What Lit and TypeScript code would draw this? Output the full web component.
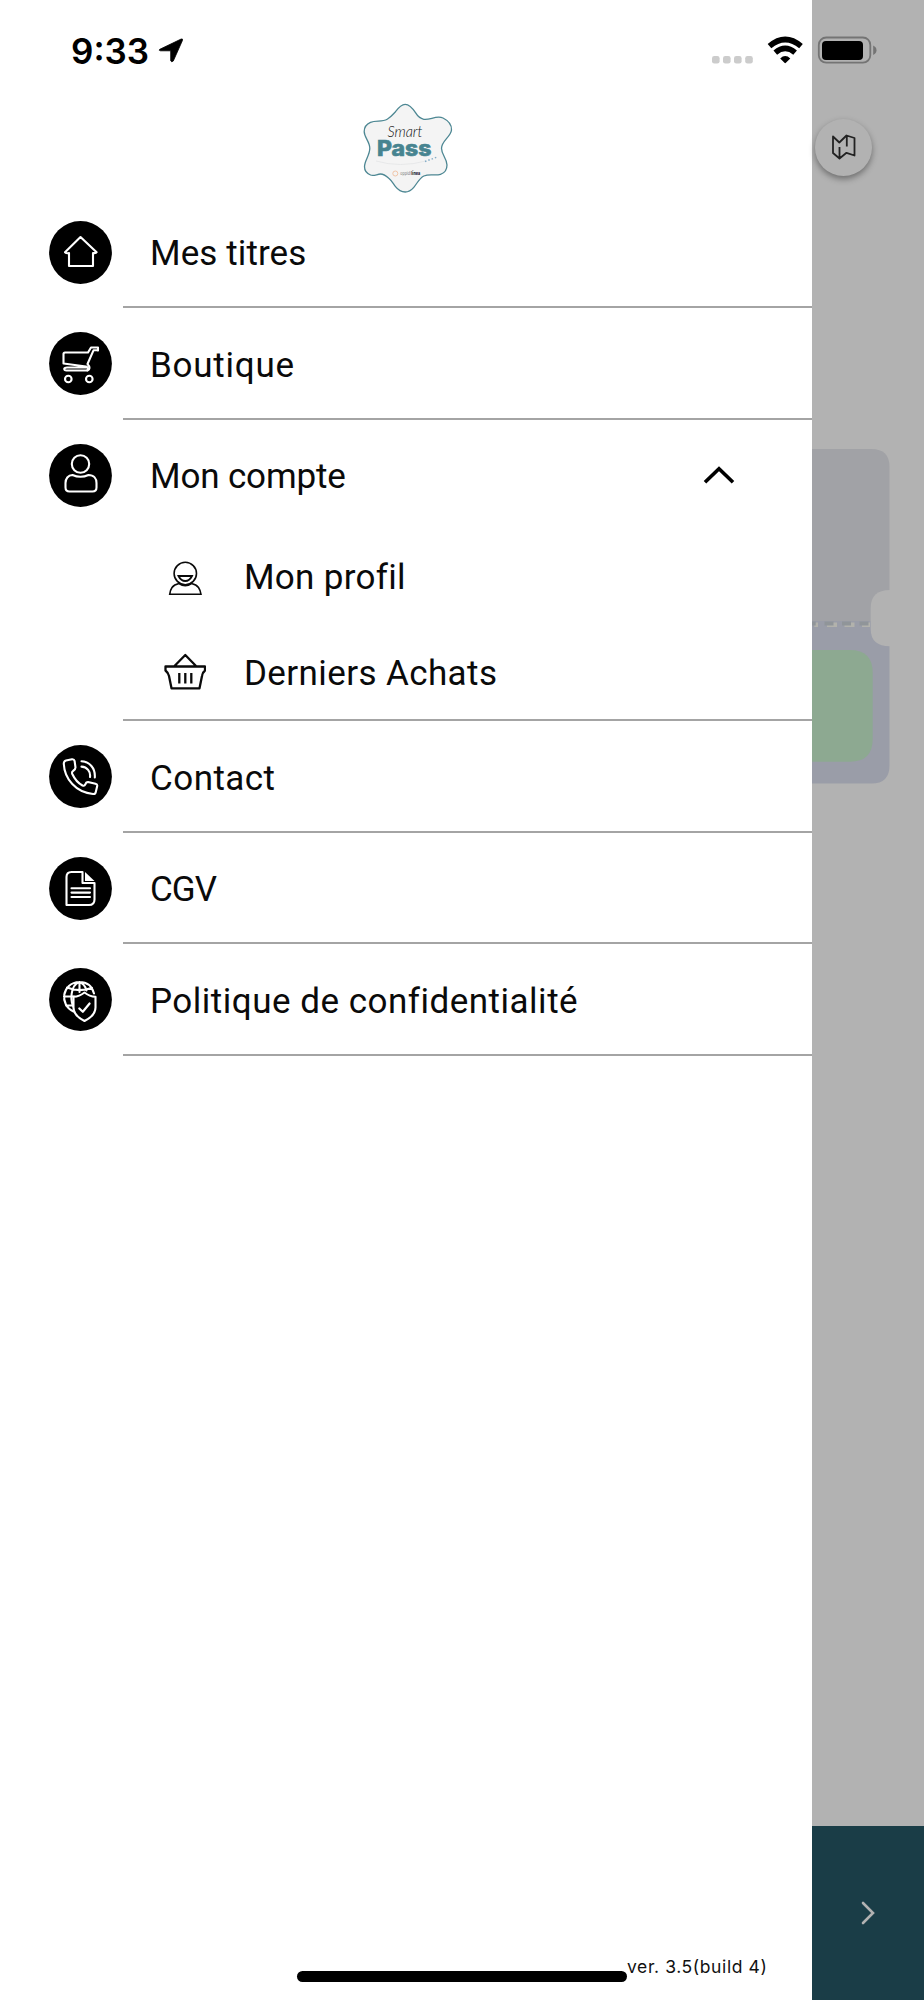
import { LitElement, html, css, svg, TemplateResult } from "lit";
import { customElement, property } from "lit/decorators.js";

const glyphs: Record<string, TemplateResult> = {
  home: svg`<path d="M31.500 16 L16 31.300 Q16.500 32.500 20 32 V45 H44 V32 Q47 32.500 47.600 31.300 Z"/>`,
  cart: svg`
    <path d="M49 18.500 V15.500 H42 L39 20.500 H16 Q14.500 20.500 14.500 22 V31.500 L37 34.500 Q40.500 36 38 38.500 H17.500 Q15 38.500 15.300 36.500 Q15.700 35.500 18 35.500 H38"/>
    <path d="M49 18.300 H44.500 L38.500 32 Q42.500 36.500 38.500 38.500"/>
    <circle cx="19.300" cy="47" r="3.300"/><circle cx="40.300" cy="47" r="3.300"/>`,
  user: svg`<circle cx="31.500" cy="20" r="8.700"/>
    <path d="M23.500 31 Q31.500 34.500 39.500 31 C45 31 47.500 35 47.500 39 V43.500 Q47.500 47.500 43.500 47.500 H20.500 Q16.500 47.500 16.500 43.500 V39 C16.500 35 19 31 23.500 31 Z"/>`,
  phone: svg`<path d="M17 15.500 L23 14.200 Q25.200 14 25.600 16 L26.500 22.500 Q26.500 24.500 24 26 Q22.500 27 23.300 29 Q27 37 33.500 40.500 Q35.500 41.300 36.200 39.700 Q37 37 39 37 L46.500 38.700 Q48.500 39.300 48.200 41 L46.800 47 Q46.300 49.300 44 49 C27 47.500 15.500 34 14.800 19 Q14.700 16 17 15.500 Z"/>
    <path d="M32.500 16.300 C40.500 16.800 46.500 23 45.800 32.500 M32.500 21.600 C38 22 41.800 26.500 41 32"/>`,
  doc: svg`<path d="M33.500 15 H22.500 Q17.500 15 17.500 20 V48 H40 Q45.500 48 45.500 42.500 V26 H33.500 Z"/>
    <path fill="#fff" stroke="none" d="M36 15 L45.500 24 H36 Z"/>
    <path d="M22.500 31.300 H41 M22.500 35.600 H41 M22.500 40 H41"/>`,
  privacy: svg`<path d="M24.500 43.500 C10 37 12.500 14.500 30.500 14 C38 14 43 18 45 25.500 M26 41 C20.500 34 21 17 30.500 14 C34.500 15.500 36.500 18.500 37.500 22.500 M30.500 14 V24 M18 19.500 Q30.500 24.500 43 19.800 M15 28.500 H25 M17 37.500 H24"/>
    <path fill="#000" d="M35.500 24.500 Q40.500 28.500 46.500 28.800 V39.500 Q46.500 47.500 35.500 53 Q24.500 47.500 24.500 39.500 V28.800 Q30.500 28.500 35.500 24.500 Z"/>
    <path stroke-width="2.200" d="M30.300 40.500 L33.800 43.800 L40.600 35.500"/>`,
};

@customElement("menu-row")
class MenuRow extends LitElement {
  @property() icon = "";
  @property() label = "";
  @property({ type: Number }) spacing = 0;
  @property({ type: Boolean }) open = false;

  static styles = css`
    :host { display: block; }
    .row { display: flex; align-items: center; height: 111.6px; padding: 0 77.500px 0 48.700px; box-sizing: border-box; }
    .disc { width: 63px; height: 63px; flex: none; margin-right: 38.300px; }
    .disc g { fill: none; stroke: #fff; stroke-width: 2.100; stroke-linejoin: round; stroke-linecap: round; }
    .label { font: 400 35px/40px Roboto, sans-serif; white-space: nowrap; color: #0a0a0a; padding-top: 3.600px; }
    .caret { margin-left: auto; width: 32px; height: 20px; }
  `;

  render() {
    return html`<div class="row">
      <svg class="disc" viewBox="0 0 63 63"><circle cx="31.500" cy="31.500" r="31.400" fill="#000" /><g>${glyphs[this.icon]}</g></svg>
      <span class="label" style="letter-spacing:${this.spacing}px">${this.label}</span>
      ${this.open
        ? html`<svg class="caret" viewBox="0 0 32 20"><path d="M2 17.300 L16 3.700 L30 17.300" fill="none" stroke="#000" stroke-width="3.600" /></svg>`
        : null}
    </div>`;
  }
}

@customElement("status-bar")
class StatusBar extends LitElement {
  static styles = css`
    :host { display: flex; align-items: center; height: 100px; padding: 0 47px 0 71px; box-sizing: border-box; }
    .time { font: 600 35px/40px Inter, sans-serif; color: #000; padding-top: 1px; }
    .arrow { width: 26px; height: 26px; margin-left: 9px; }
    .system { margin-left: auto; width: 166px; height: 30px; }
  `;

  render() {
    return html`
      <span class="time">9:33</span>
      <svg class="arrow" viewBox="0 0 26 26"><path d="M1.800 12.300 L23.200 2 Q25 1.500 24.500 3.300 L15.300 24 Q13.500 25.600 12.700 23.800 V13.800 H2.500 Q0.300 13.300 1.800 12.300 Z" stroke="#000" stroke-width=".8" /></svg>
      <svg class="system" viewBox="711 35 166 30">
        <g fill="#ccc">
          <rect x="712" y="56" width="7.600" height="7.600" rx="2.300" /><rect x="723" y="56" width="7.600" height="7.600" rx="2.300" />
          <rect x="734" y="56" width="7.600" height="7.600" rx="2.300" /><rect x="745.200" y="56" width="7.600" height="7.600" rx="2.300" />
        </g>
        <g fill="none" stroke="#000" stroke-width="5.600">
          <path d="M769.500 46.200 Q785.200 32.800 801 46.200" /><path d="M775.300 52.600 Q785.200 44.200 795.100 52.600" />
        </g>
        <path d="M780.200 58.500 Q785.200 53.700 790.300 58.500 L785.900 62.800 Q785.200 63.500 784.500 62.800 Z" />
        <rect x="818.800" y="37.500" width="51.500" height="25.200" rx="7.500" fill="none" stroke="#747474" stroke-width="1.800" />
        <rect x="822" y="41" width="41" height="19" rx="4" />
        <path d="M873.200 45.500 Q876.500 47.200 876.500 50.300 T873.200 55 Z" fill="#747474" />
      </svg>`;
  }
}

@customElement("app-root")
class AppRoot extends LitElement {
  static styles = css`
    :host { display: block; position: relative; width: 924px; height: 2000px; overflow: hidden; background: #b2b2b2; }
    .status { position: absolute; top: 0; left: 0; right: 0; z-index: 2; }
    .screen { display: flex; height: 100%; }
    .drawer { width: 812.3px; flex: none; display: flex; flex-direction: column; background: #fff; box-sizing: border-box; padding-top: 102px; }
    .logo { width: 92px; height: 92px; margin: 0 0 2.400px 361.500px; flex: none; }
    .line { height: 2px; margin: -2px 0 0 123px; background: #a4a4a4; }
    .sub { display: flex; align-items: center; height: 96px; padding-left: 164px; }
    .subs { height: 189.800px; }
    .subs .sub:first-child { height: 93px; }
    .sub svg { width: 42px; height: 42px; margin-right: 38px; flex: none; fill: none; stroke: #0a0a0a; }
    .sub span { font: 400 35px/40px Roboto, sans-serif; color: #0a0a0a; white-space: nowrap; letter-spacing: .4px; padding-top: 3px; }
    .sub:first-child span { letter-spacing: .3px; padding-top: 1px; }
    .foot { margin-top: auto; height: 48px; display: flex; align-items: flex-start; padding-left: 297px; }
    .home { width: 330px; height: 11px; border-radius: 6px; background: #000; margin-top: 19px; }
    .ver { font: 400 17.500px/22px Inter, sans-serif; letter-spacing: .6px; color: #111; white-space: nowrap; margin-top: 4px; }
    .behind { flex: 1; display: flex; flex-direction: column; padding-top: 118.800px; }
    .map { width: 57px; height: 57px; border-radius: 50%; margin-left: 3px; background: #b2b2b2; box-shadow: 0 3px 6px rgba(0,0,0,.38); display: flex; align-items: center; justify-content: center; }
    .map svg { width: 26px; height: 28px; }
    .ticket { margin-top: 273.500px; width: 77.500px; height: 334.500px; display: block; }
    .next { margin-top: auto; height: 174px; background: #1a3d47; display: flex; justify-content: center; padding-top: 74px; box-sizing: border-box; }
    .next svg { width: 16px; height: 26px; }
    .logo .smart { font: italic 300 15px Lato, sans-serif; }
    .logo .pass { font: 800 21px Inter, sans-serif; }
    .logo .by { font: 400 4.500px Inter, sans-serif; }
    .logo .brand { font: 800 4.500px Inter, sans-serif; }
  `;

  render() {
    return html`
      <status-bar class="status"></status-bar>
      <div class="screen">
        <nav class="drawer">
          <svg class="logo" viewBox="0 0 92 92">
            <path d="M43.200 2.300 C47.500 2.300 50.500 6 53.500 10.700 C55.500 14 57.500 16.500 61.800 17.300 C68 18.300 74.500 13 81 16 C86 18.500 89.800 23 89.500 28 C89 34.500 79.500 39 79.500 46.300 C79.500 53 85 56.500 85 63 C85 67.500 82.500 71 78.500 72.300 C73 74 67.500 71.500 61.800 74 C57 76.500 55.500 81 51.800 85.300 C49 88.500 46.500 90 43.200 90 C39.500 90 36.500 88.500 33.500 84.700 C31 81.500 30 79 26.800 76.300 C24 73.800 22 72 18.500 72 C15 72 12 74.500 8.500 73 C5 71.500 2.500 68.500 2.500 64.700 C2.500 58.500 7.800 53.500 7.800 46.300 C7.800 39.500 2.200 35.500 2.200 29.500 C2.200 25.500 4.500 22 8.500 20.300 C14 18 20 20.300 25.200 17.300 C29 15 30.500 13 33.500 9.700 C36.500 5.500 39 2.300 43.200 2.300 Z" fill="#f4f4f4" stroke="#4d8793" stroke-width="1.300"/>
            <text class="smart" x="25.500" y="34.500" textLength="35" lengthAdjust="spacingAndGlyphs" fill="#111">Smart</text>
            <text class="pass" x="15" y="54" textLength="54.500" lengthAdjust="spacingAndGlyphs" fill="#478490" stroke="#478490" stroke-width=".6">Pass</text>
            <path d="M14 59 Q38 66 64 59" fill="none" stroke="#e3e5e6" stroke-width=".8"/>
            <path d="M63 59.500 L74.500 55.300" stroke="#83adc8" stroke-width="1.500" stroke-dasharray="1.500 2"/>
            <circle cx="33.300" cy="71.500" r="2.500" fill="none" stroke="#f1c5a7"/>
            <text class="by" x="38.300" y="72.800" textLength="10.500" lengthAdjust="spacingAndGlyphs" fill="#777">oppidi</text>
            <text class="brand" x="49.300" y="72.800" textLength="9" lengthAdjust="spacingAndGlyphs" fill="#1d2633">linea</text>
          </svg>
          <menu-row icon="home" label="Mes titres" .spacing=${0.1}></menu-row><div class="line"></div>
          <menu-row icon="cart" label="Boutique" .spacing=${0.75}></menu-row><div class="line"></div>
          <menu-row icon="user" label="Mon compte" .spacing=${-0.15} open></menu-row>
          <div class="subs">
            <div class="sub">
              <svg viewBox="0 0 42 42"><g stroke-width="1.600"><circle cx="21.300" cy="16.500" r="11.200"/><path stroke-width="1.800" d="M14.500 19 H28 Q25.500 24 21.300 24 Q17 24 14.500 19 Z"/><path d="M15 26.500 C8 28 6.500 32 5.700 37.300 H37 C36 32 34.500 28 27.500 26.500 Q21.300 31 15 26.500 Z"/></g></svg>
              <span>Mon profil</span>
            </div>
            <div class="sub">
              <svg viewBox="0 0 42 42"><g stroke-width="2.300" stroke-linejoin="round"><path d="M10 15.500 L21.300 4 L32.500 15.500 M1.500 15.500 H41 V19.500 Q38.500 21.500 38 25 L35.500 37.300 H7.500 L5 25 Q4 21.500 1.500 19.500 Z M15.300 22 V32.500 M21.300 22 V32.500 M27.300 22 V32.500"/></g></svg>
              <span>Derniers Achats</span>
            </div>
          </div>
          <div class="line"></div>
          <menu-row icon="phone" label="Contact" .spacing=${0.45}></menu-row><div class="line"></div>
          <menu-row icon="doc" label="CGV" .spacing=${-0.9}></menu-row><div class="line"></div>
          <menu-row icon="privacy" label="Politique de confidentialité" .spacing=${0.5}></menu-row><div class="line"></div>
          <div class="foot"><div class="home"></div><span class="ver">ver. 3.5(build 4)</span></div>
        </nav>
        <div class="behind">
          <div class="map"><svg viewBox="0 0 26 28"><path d="M2 3.500 L8.300 9.500 L15.500 2.500 L23.500 5 V22.500 L15.500 19.800 L8.500 25.500 L2 20 Z M8.500 25 V14 M15.800 3 V13.500" fill="none" stroke="#222" stroke-width="1.800" stroke-linejoin="round"/></svg></div>
          <svg class="ticket" viewBox="0 0 77.500 334.500">
            <path d="M0 0 H59.500 Q77.500 0 77.500 18 V172 H0 Z" fill="#a1a2a6"/>
            <path d="M0 172 H77.500 V316.500 Q77.500 334.500 59.500 334.500 H0 Z" fill="#9a9da8"/>
            <path d="M2.300 175.800 H6 M15 175.800 H25 M32.500 175.800 H42.500 M50 175.800 H58" stroke="#b2b2ac" stroke-width="4.400"/>
            <path d="M0 174.500 H3.700 M12.500 174.500 H21.500 M30 174.500 H39 M47.500 174.500 H56.500" stroke="#909599" stroke-width="4"/>
            <path d="M78 141 Q58.700 141 58.700 159 V180 Q58.700 197.300 78 197.300 Z" fill="#b2b2b2"/>
            <path d="M0 201 H38 Q60.700 201 60.700 224 V290 Q60.700 312.700 38 312.700 H0 Z" fill="#8da991"/>
          </svg>
          <div class="next"><svg viewBox="0 0 16 26"><path d="M3 3 L13 13 L3 23" fill="none" stroke="#b2b2b2" stroke-width="2.600" stroke-linecap="round"/></svg></div>
        </div>
      </div>`;
  }
}
